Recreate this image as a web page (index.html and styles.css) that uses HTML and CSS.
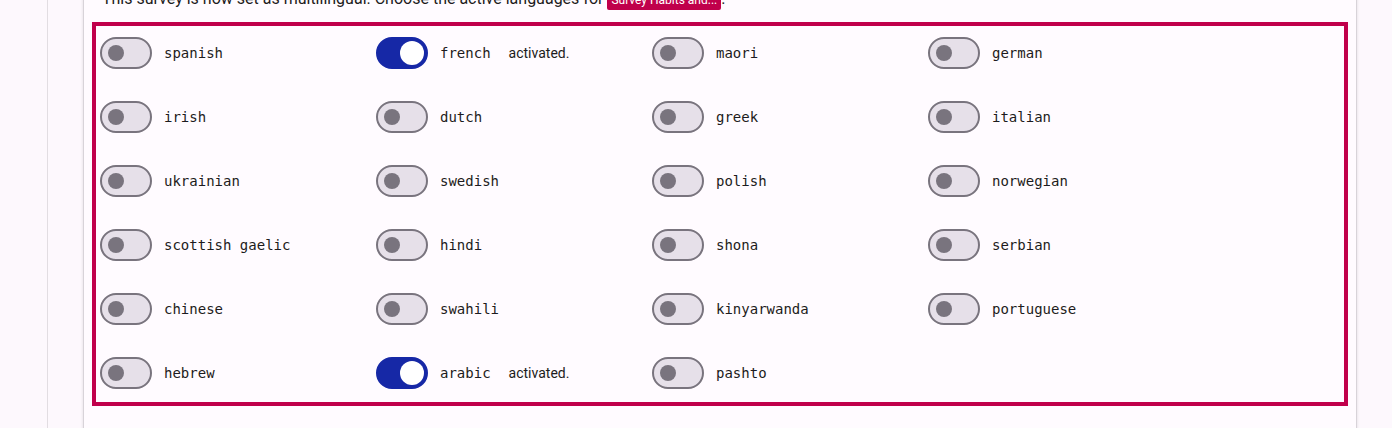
FILE: index.html
```html
<!DOCTYPE html>
<html lang="en">

<head>
  <meta charset="UTF-8" />
  <meta name="viewport" content="width=device-width, initial-scale=1.0" />
  <title>Survey languages</title>
  <link rel="stylesheet" href="styles.css">
</head>

<body>

  <!-- Rail -->
  <nav class="rail"></nav>

  <!-- Contenido -->
  <main class="main">
    <section class="card">
      <p class="intro">
        This survey is now set as multilingual. Choose the active languages for
        <span class="badge">Survey Habits and...</span>.
      </p>

      <div class="langBox">
        <label class="lang"><span class="switch"></span><span class="name">spanish</span></label>
        <label class="lang"><span class="switch on"></span><span class="name">french</span><span class="state">activated.</span></label>
        <label class="lang"><span class="switch"></span><span class="name">maori</span></label>
        <label class="lang"><span class="switch"></span><span class="name">german</span></label>

        <label class="lang"><span class="switch"></span><span class="name">irish</span></label>
        <label class="lang"><span class="switch"></span><span class="name">dutch</span></label>
        <label class="lang"><span class="switch"></span><span class="name">greek</span></label>
        <label class="lang"><span class="switch"></span><span class="name">italian</span></label>

        <label class="lang"><span class="switch"></span><span class="name">ukrainian</span></label>
        <label class="lang"><span class="switch"></span><span class="name">swedish</span></label>
        <label class="lang"><span class="switch"></span><span class="name">polish</span></label>
        <label class="lang"><span class="switch"></span><span class="name">norwegian</span></label>

        <label class="lang"><span class="switch"></span><span class="name">scottish gaelic</span></label>
        <label class="lang"><span class="switch"></span><span class="name">hindi</span></label>
        <label class="lang"><span class="switch"></span><span class="name">shona</span></label>
        <label class="lang"><span class="switch"></span><span class="name">serbian</span></label>

        <label class="lang"><span class="switch"></span><span class="name">chinese</span></label>
        <label class="lang"><span class="switch"></span><span class="name">swahili</span></label>
        <label class="lang"><span class="switch"></span><span class="name">kinyarwanda</span></label>
        <label class="lang"><span class="switch"></span><span class="name">portuguese</span></label>

        <label class="lang"><span class="switch"></span><span class="name">hebrew</span></label>
        <label class="lang"><span class="switch on"></span><span class="name">arabic</span><span class="state">activated.</span></label>
        <label class="lang"><span class="switch"></span><span class="name">pashto</span></label>
      </div>
    </section>
  </main>

</body>

</html>
```

FILE: styles.css
```css
:root {
  --page-bg: #fdf8fd;
  --card-bg: #fffbff;
  --text: #1d1b20;
  --accent: #c0004b;
  --outline: #79747e;
  --track-off: #e6e0e9;
  --track-on: #1628a6;
}

* {
  box-sizing: border-box;
}

body {
  margin: 0;
  height: 100vh;
  overflow: hidden;
  display: flex;
  background-color: var(--page-bg);
  font-family: Roboto, "Liberation Sans", sans-serif;
  color: var(--text);
}

.rail {
  width: 48px;
  flex-shrink: 0;
  border-right: 1px solid #e2dde2;
}

.main {
  flex: 1;
  padding: 0 35px;
}

.card {
  background-color: var(--card-bg);
  border-left: 1px solid #d8d3d9;
  border-right: 1px solid #d8d3d9;
  box-shadow: 0 1px 3px rgba(0, 0, 0, 0.12);
  padding: 0 8px 40px;
  min-height: 500px;
}

.intro {
  margin: -13px 0 11px;
  padding-left: 10px;
  font-size: 16px;
  line-height: 24px;
}

.badge {
  display: inline-block;
  background-color: var(--accent);
  color: white;
  font-size: 12px;
  line-height: 16px;
  padding: 1px 4px 2px;
  border-radius: 2px;
}

/* Caja de idiomas */
.langBox {
  border: 4px solid var(--accent);
  padding: 11px 4px 13px;
  display: grid;
  grid-template-columns: repeat(4, 276px);
  grid-auto-rows: 32px;
  row-gap: 32px;
}

.lang {
  display: flex;
  align-items: center;
}

.switch {
  position: relative;
  width: 52px;
  height: 32px;
  border: 2px solid var(--outline);
  border-radius: 16px;
  background-color: var(--track-off);
  flex-shrink: 0;
}

.switch::after {
  content: "";
  position: absolute;
  top: 6px;
  left: 6px;
  width: 16px;
  height: 16px;
  border-radius: 50%;
  background-color: var(--outline);
}

.switch.on {
  background-color: var(--track-on);
  border-color: var(--track-on);
}

.switch.on::after {
  top: 2px;
  left: 22px;
  width: 24px;
  height: 24px;
  background-color: white;
}

.name {
  margin-left: 12px;
  font-family: "DejaVu Sans Mono", monospace;
  font-size: 14px;
}

.state {
  margin-left: 18px;
  font-size: 14px;
}
```
